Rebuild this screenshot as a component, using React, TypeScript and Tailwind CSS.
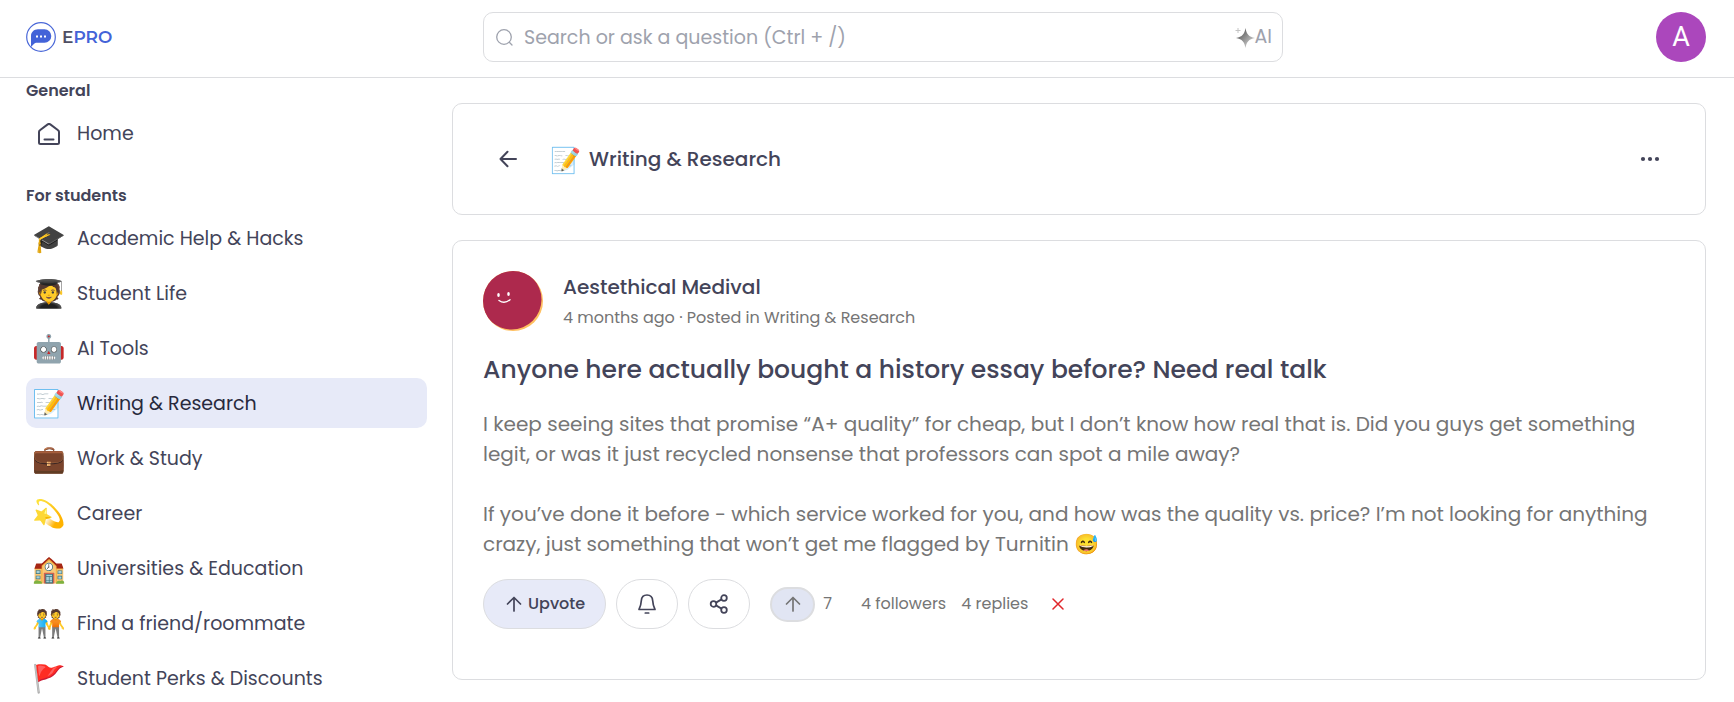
import React from "react";

// Sidebar data
const studentLinks = [
  { icon: "🎓", label: "Academic Help & Hacks" },
  { icon: "🧑‍🎓", label: "Student Life" },
  { icon: "🤖", label: "AI Tools" },
  { icon: "📝", label: "Writing & Research", active: true },
  { icon: "💼", label: "Work & Study" },
  { icon: "💫", label: "Career" },
  { icon: "🏫", label: "Universities & Education" },
  { icon: "🧑‍🤝‍🧑", label: "Find a friend/roommate" },
  { icon: "🚩", label: "Student Perks & Discounts" },
];

// Icons
function ArrowUp({ className }: { className?: string }) {
  return (
    <svg viewBox="0 0 16 16" fill="none" stroke="currentColor" strokeWidth="1.7" strokeLinecap="round" strokeLinejoin="round" className={className}>
      <path d="M8 15V1.500M1.500 8L8 1.500 14.500 8" />
    </svg>
  );
}

function Logo() {
  return (
    <a href="#" className="flex items-center gap-[6px]">
      <svg viewBox="0 0 30 30" className="size-[30px]">
        <circle cx="15" cy="15" r="14.3" fill="none" stroke="#4a68d8" strokeWidth="1.2" />
        <path d="M5 25V14c0-4 3-6.800 7-6.800h6.500a6.800 6.800 0 0 1 0 13.600H10c-1.800 0-2.800 2.400-5 4.200z" fill="#4363d8" />
        <g fill="#fff">
          <rect x="10" y="13.500" width="2" height="2" />
          <rect x="14" y="13.500" width="2" height="2" />
          <rect x="18" y="13.500" width="2" height="2" />
        </g>
      </svg>
      <span className="pt-px font-[Montserrat,Poppins,sans-serif] text-[17px] font-semibold text-[#4363d8]">
        <span className="text-[#4f4f63]">E</span>PRO
      </span>
    </a>
  );
}

function Header() {
  return (
    <header className="flex h-[78px] shrink-0 items-center border-b border-[#dcdde0] bg-white pr-7 pb-[3px] pl-[26px]">
      <div className="w-[457px] shrink-0">
        <Logo />
      </div>
      <div className="flex h-[50px] max-w-[800px] flex-1 items-center rounded-[10px] border border-[#dcdde0] pr-[10px] pl-3">
        <svg viewBox="0 0 17 17" fill="none" stroke="#9ea2ad" strokeWidth="1.3" strokeLinecap="round" className="size-[17px] shrink-0">
          <circle cx="8" cy="8" r="7.3" />
          <path d="M13.300 13.300l2.700 2.700" />
        </svg>
        <input
          type="text"
          aria-label="Search"
          placeholder="Search or ask a question (Ctrl + /)"
          className="ml-[11px] min-w-0 flex-1 bg-transparent pt-[2px] text-[19px] outline-none placeholder:text-[#9ea2ad]"
        />
        <button type="button" className="flex items-center pt-px text-[19px] text-[#9ea2ad]">
          <svg viewBox="0 0 20 20" className="size-5">
            <defs>
              <linearGradient id="spark" x1="0" y1="0" x2="1" y2="1">
                <stop offset="0.2" stopColor="#5e5e5e" />
                <stop offset="0.8" stopColor="#c9c9c9" />
              </linearGradient>
            </defs>
            <path d="M10.500 0c1 6 3.200 8.800 9.500 10-6.300 1.200-8.500 4-9.500 10-1-6-3.200-8.800-9.500-10C7.300 8.800 9.500 6 10.500 0z" fill="url(#spark)" />
            <path d="M3 0v5M.5 2.500h5" stroke="#c4c4c4" strokeWidth="1" />
          </svg>
          AI
        </button>
      </div>
      <button type="button" aria-label="Account" className="ml-auto size-[50px] rounded-full bg-[#ab47bc] font-[Roboto] text-[27px] text-white">
        A
      </button>
    </header>
  );
}

function Sidebar() {
  return (
    <nav className="w-[427px] shrink-0 overflow-hidden pl-[26px] text-[#434459]">
      <h2 className="text-base leading-[26px] font-semibold">General</h2>
      <a href="#" className="mt-1 flex h-[50px] items-center rounded-[10px] pt-[2px] text-[19px]">
        <span className="flex w-[51px] pl-3">
          <svg viewBox="0 0 22 22" fill="none" stroke="currentColor" strokeWidth="2" strokeLinecap="round" strokeLinejoin="round" className="size-[22px]">
            <path d="M1 9c0-.8.300-1.300.9-1.700L9.700 1.400c.8-.6 1.800-.6 2.600 0l7.800 5.900c.6.400.9.900.9 1.700v10.500a1.500 1.500 0 0 1-1.500 1.500h-17A1.500 1.500 0 0 1 1 19.500zM6.500 16.500h9" />
          </svg>
        </span>
        Home
      </a>
      <h2 className="mt-[25px] text-base leading-[26px] font-semibold">For students</h2>
      <ul className="mt-1 flex flex-col gap-[5px]">
        {studentLinks.map((link) => (
          <li key={link.label}>
            <a
              href="#"
              className={
                link.active
                  ? "flex h-[50px] items-center rounded-[10px] bg-[#e7eaf8] pt-[2px] text-[19px] text-[#28293d]"
                  : "flex h-[50px] items-center rounded-[10px] pt-[2px] text-[19px]"
              }
            >
              <span className="w-[51px] pl-[6px] text-[27px]">{link.icon}</span>
              {link.label}
            </a>
          </li>
        ))}
      </ul>
    </nav>
  );
}

function TopicBar() {
  return (
    <section className="flex h-[112px] shrink-0 items-center rounded-[10px] border border-[#dcdde0] pr-[45px] pl-[46px] text-[#434459]">
      <button type="button" aria-label="Back">
        <svg viewBox="0 0 18 18" fill="none" stroke="currentColor" strokeWidth="2" strokeLinecap="round" strokeLinejoin="round" className="size-[18px]">
          <path d="M17 9H1.500M8.500 1.800L1.500 9l7 7.200" />
        </svg>
      </button>
      <h1 className="ml-[33px] flex items-center gap-2 text-xl font-medium">
        <span className="pt-[2px] text-[25px]">📝</span>
        Writing &amp; Research
      </h1>
      <button type="button" aria-label="More" className="ml-auto">
        <svg viewBox="0 0 20 6" fill="currentColor" className="h-[6px] w-5">
          <circle cx="3" cy="3" r="2.1" />
          <circle cx="10" cy="3" r="2.1" />
          <circle cx="17" cy="3" r="2.1" />
        </svg>
      </button>
    </section>
  );
}

function PostActions() {
  return (
    <div className="mt-5 flex items-center text-base text-[#757575]">
      <button type="button" className="flex h-[50px] items-center gap-[6px] rounded-full border border-[#dcdde0] bg-[#e7eaf8] pr-5 pl-[22px] font-medium text-[#434459]">
        <ArrowUp className="size-4" />
        Upvote
      </button>
      <button type="button" aria-label="Follow" className="ml-[10px] flex h-[50px] w-[62px] items-center justify-center rounded-full border border-[#dcdde0] text-[#434459]">
        <svg viewBox="0 0 20 20" fill="none" stroke="currentColor" strokeWidth="1.7" strokeLinecap="round" strokeLinejoin="round" className="size-5">
          <path d="M10 1C6.500 1 4.500 3.500 4.300 6.700 4.100 10.500 3.500 12.500 2 15.500h16c-1.500-3-2.100-5-2.300-8.800C15.500 3.500 13.500 1 10 1zM8.300 19h3.400" />
        </svg>
      </button>
      <button type="button" aria-label="Share" className="ml-[10px] flex h-[50px] w-[62px] items-center justify-center rounded-full border border-[#dcdde0] text-[#434459]">
        <svg viewBox="0 0 20 20" fill="none" stroke="currentColor" strokeWidth="1.8" className="size-5">
          <circle cx="4.500" cy="10" r="2.800" />
          <circle cx="15" cy="4" r="2.800" />
          <circle cx="15" cy="16" r="2.800" />
          <path d="M7 8.600l5.500-3.200M7 11.400l5.500 3.200" />
        </svg>
      </button>
      <span className="ml-5 flex h-[35px] w-[45px] items-center justify-center rounded-full border-2 border-[#dcdde0] bg-[#e1e5f3]">
        <ArrowUp className="size-4" />
      </span>
      <span className="ml-2">7</span>
      <span className="ml-[29px]">4 followers</span>
      <span className="ml-[15px]">4 replies</span>
      <button type="button" aria-label="Close" className="ml-6 text-[#e0262b]">
        <svg viewBox="0 0 12 12" fill="none" stroke="currentColor" strokeWidth="1.5" strokeLinecap="round" className="size-3">
          <path d="M1 1l10 10M11 1L1 11" />
        </svg>
      </button>
    </div>
  );
}

function Post() {
  return (
    <article className="mt-[25px] rounded-[10px] border border-[#dcdde0] px-[30px] pt-[30px] pb-[50px]">
      <div className="flex items-center gap-5">
        <svg viewBox="0 0 60 60" className="size-[60px]">
          <clipPath id="face">
            <circle cx="30" cy="30" r="30" />
          </clipPath>
          <circle cx="30" cy="30" r="30" fill="#ffc061" />
          <circle cx="28.500" cy="28.500" r="30" fill="#ad294d" clipPath="url(#face)" />
          <g fill="#fff">
            <ellipse cx="15.500" cy="24" rx="1.300" ry="2" />
            <ellipse cx="25.500" cy="23" rx="1.300" ry="2" />
          </g>
          <path d="M16 29.500c3.500 2.600 7.800 2 11-.8" fill="none" stroke="#fff" strokeWidth="1.4" strokeLinecap="round" />
        </svg>
        <div>
          <p className="text-xl leading-8 font-medium text-[#434459]">Aestethical Medival</p>
          <p className="mt-[2px] text-base leading-[26px] text-[#757575]">4 months ago · Posted in Writing &amp; Research</p>
        </div>
      </div>
      <h2 className="mt-5 text-[25px] leading-[38px] font-medium text-[#434459]">
        Anyone here actually bought a history essay before? Need real talk
      </h2>
      <div className="mt-5 flex flex-col gap-[30px] text-xl leading-[30px] text-[#757575]">
        <p>
          I keep seeing sites that promise “A+ quality” for cheap, but I don’t know how real that is. Did you guys get something legit, or was it just recycled nonsense that professors can spot a mile away?
        </p>
        <p>
          If you’ve done it before - which service worked for you, and how was the quality vs. price? I’m not looking for anything crazy, just something that won’t get me flagged by Turnitin 😅
        </p>
      </div>
      <PostActions />
    </article>
  );
}

export default function App() {
  return (
    <div className="flex h-screen flex-col bg-white font-[Poppins,Inter,sans-serif]">
      <Header />
      <div className="flex min-h-0 flex-1">
        <Sidebar />
        <main className="flex min-w-0 flex-1 flex-col overflow-hidden pt-[25px] pr-7 pl-[25px]">
          <TopicBar />
          <Post />
        </main>
      </div>
    </div>
  );
}
